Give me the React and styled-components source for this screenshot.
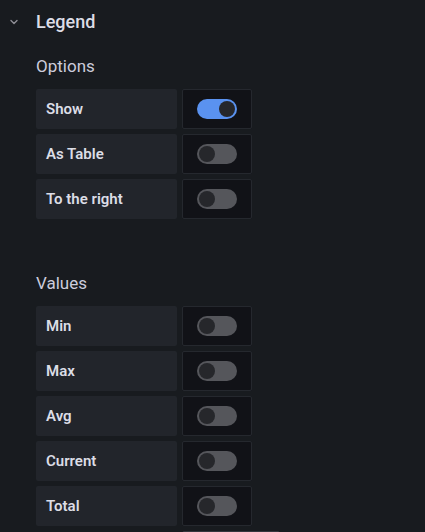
import styled, { createGlobalStyle } from "styled-components";

const GlobalStyle = createGlobalStyle`
  html, body {
    margin: 0;
    padding: 0;
    background: #181b1f;
    overflow: hidden;
  }
  body {
    font-family: Roboto, "Liberation Sans", sans-serif;
    color: #ccccdc;
  }
`;

const options = [
  { label: "Show", on: true },
  { label: "As Table", on: false },
  { label: "To the right", on: false },
];

const values = ["Min", "Max", "Avg", "Current", "Total"];

const App = () => {
  return (
    <>
      <GlobalStyle />
      <Panel>
        <Header>
          <Chevron width="10" height="10" viewBox="0 0 10 10">
            <path d="M2 3.5 L5 6.5 L8 3.5" fill="none" stroke="#8e8e96" strokeWidth="1.4" strokeLinecap="round" strokeLinejoin="round" />
          </Chevron>
          <Title>Legend</Title>
        </Header>
        <Body>
          <Group>
            <GroupTitle>Options</GroupTitle>
            <Rows>
              {options.map((o) => (
                <Row key={o.label}>
                  <Label>{o.label}</Label>
                  <SwitchBox>
                    <Track $on={o.on}>
                      <Knob />
                    </Track>
                  </SwitchBox>
                </Row>
              ))}
            </Rows>
          </Group>
          <Group $spaced>
            <GroupTitle>Values</GroupTitle>
            <Rows>
              {values.map((v) => (
                <Row key={v}>
                  <Label>{v}</Label>
                  <SwitchBox>
                    <Track>
                      <Knob />
                    </Track>
                  </SwitchBox>
                </Row>
              ))}
              <Row>
                <Spacer />
                <InputBox />
              </Row>
            </Rows>
          </Group>
        </Body>
      </Panel>
    </>
  );
};

const Panel = styled.div`
  width: 425px;
  height: 532px;
  overflow: hidden;
`;

const Header = styled.div`
  height: 43px;
  display: flex;
  align-items: center;
  padding-left: 9px;
`;

const Chevron = styled.svg`
  width: 10px;
  height: 10px;
  margin-right: 17px;
`;

const Title = styled.div`
  font-size: 18px;
  font-weight: 500;
  color: #dcdde6;
`;

const Body = styled.div`
  padding-left: 36px;
  padding-top: 11px;
`;

const Group = styled.div`
  margin-top: ${(p) => (p.$spaced ? "52px" : "0")};
`;

const GroupTitle = styled.div`
  font-size: 17px;
  line-height: 24px;
  color: #ccccdc;
  margin-bottom: 11px;
`;

const Rows = styled.div`
  display: flex;
  flex-direction: column;
  gap: 5px;
`;

const Row = styled.div`
  display: flex;
  gap: 5px;
  height: 40px;
`;

const Label = styled.div`
  width: 141px;
  box-sizing: border-box;
  padding-left: 10px;
  display: flex;
  align-items: center;
  background: #22252b;
  border-radius: 2px;
  font-size: 15px;
  font-weight: 600;
  color: #dcdde6;
`;

const Spacer = styled.div`
  width: 141px;
`;

const SwitchBox = styled.div`
  width: 70px;
  box-sizing: border-box;
  display: flex;
  align-items: center;
  justify-content: center;
  background: #111217;
  border: 1px solid #25282e;
  border-radius: 2px;
`;

const InputBox = styled.div`
  width: 98px;
  box-sizing: border-box;
  background: #111217;
  border: 1px solid #34373d;
  border-radius: 2px;
`;

const Track = styled.div`
  width: 40px;
  height: 20px;
  border-radius: 10px;
  background: ${(p) => (p.$on ? "#5a92f0" : "#55565b")};
  display: flex;
  align-items: center;
  justify-content: ${(p) => (p.$on ? "flex-end" : "flex-start")};
  padding: 0 2px;
  box-sizing: border-box;
`;

const Knob = styled.div`
  width: 16px;
  height: 16px;
  border-radius: 50%;
  background: #26272b;
`;

export default App;
